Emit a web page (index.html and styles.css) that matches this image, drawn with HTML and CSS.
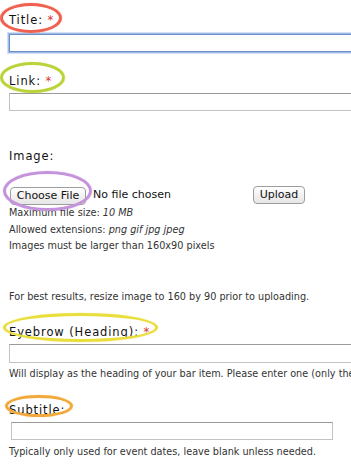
FILE: index.html
```html
<!DOCTYPE html>
<html>
<head>
<meta charset="utf-8">
<link rel="stylesheet" href="styles.css">
</head>
<body>
<form class="form">
  <div class="field field-title">
    <label class="label"><span class="mark mark-red"></span>Title: <span class="req">*</span></label>
    <input class="text wide focus" type="text">
  </div>
  <div class="field field-link">
    <label class="label"><span class="mark mark-green"></span>Link: <span class="req">*</span></label>
    <input class="text wide" type="text">
  </div>
  <div class="field field-image">
    <label class="label">Image:</label>
    <div class="upload-row">
      <span class="file-wrap"><span class="mark mark-purple"></span><span class="btn btn-choose">Choose File</span></span>
      <span class="nofile">No file chosen</span>
      <span class="btn btn-upload">Upload</span>
    </div>
    <div class="desc lines">
      <div>Maximum file size: <em>10 MB</em></div>
      <div>Allowed extensions: <em>png gif jpg jpeg</em></div>
      <div>Images must be larger than 160x90 pixels</div>
    </div>
    <div class="desc best">For best results, resize image to 160 by 90 prior to uploading.</div>
  </div>
  <div class="field field-eyebrow">
    <label class="label"><span class="mark mark-yellow"></span>Eyebrow (Heading): <span class="req">*</span></label>
    <input class="text wide" type="text">
    <div class="desc">Will display as the heading of your bar item. Please enter one (only the first one will be used).</div>
  </div>
  <div class="field field-subtitle">
    <label class="label"><span class="mark mark-orange"></span>Subtitle:</label>
    <input class="text short" type="text">
    <div class="desc">Typically only used for event dates, leave blank unless needed.</div>
  </div>
</form>
</body>
</html>
```

FILE: styles.css
```css
html, body {
  margin: 0;
  padding: 0;
  background: #fff;
  overflow: hidden;
}
body {
  width: 351px;
  height: 469px;
  font-family: "DejaVu Sans", Verdana, sans-serif;
  color: #000;
}
.form {
  padding: 12px 0 0 9px;
  width: 342px;
  overflow: hidden;
}
.field {
  display: flex;
  flex-direction: column;
  align-items: flex-start;
}
.label {
  position: relative;
  display: inline-block;
  font-size: 11.5px;
  line-height: 16px;
  letter-spacing: 0.9px;
  color: #111;
}
.req {
  color: #d33;
}
.mark {
  position: absolute;
  border-radius: 50%;
  border: 3px solid;
  pointer-events: none;
}
.mark-red {
  border-color: #f0604f;
  left: -9px; top: -9px; width: 56px; height: 24px;
  box-shadow: 0 0 1px #f0604f;
}
.mark-green {
  border-color: #b9d43a;
  left: -9px; top: -11px; width: 59px; height: 25px;
  box-shadow: 0 0 1px #b9d43a;
}
.mark-purple {
  border-color: #c592dc;
  left: -7px; top: -13px; width: 83px; height: 34px;
  box-shadow: 0 0 1px #c592dc;
}
.mark-yellow {
  border-color: #e9de3c;
  left: -6px; top: -11px; width: 149px; height: 23px;
  box-shadow: 0 0 1px #e9de3c;
}
.mark-orange {
  border-color: #f2a93b;
  left: -4px; top: -7px; width: 62px; height: 16px;
  box-shadow: 0 0 1px #f2a93b;
}
.text {
  display: block;
  box-sizing: border-box;
  height: 18px;
  margin: 4px 0 0 0;
  padding: 0;
  border: 1px solid #c3c3c3;
  border-top-color: #9a9a9a;
  background: #fff;
  outline: none;
}
.wide {
  width: 380px;
}
.short {
  width: 322px;
  margin-left: 2px;
}
.focus {
  border: 1px solid #6b8fc8;
  box-shadow: 0 0 0 1px #9fbbe6, 0 0 0 2px #d2e0f5;
  margin-top: 6px;
  margin-bottom: 1px;
}
.field-link {
  margin-top: 20px;
}
.field-image {
  margin-top: 37px;
}
.upload-row {
  display: flex;
  align-items: center;
  margin-top: 20px;
  width: 296px;
}
.file-wrap {
  position: relative;
  display: inline-block;
  margin-left: 1px;
}
.btn {
  display: inline-block;
  box-sizing: border-box;
  height: 18px;
  padding: 0 6px;
  border: 1px solid #9d9d9d;
  border-radius: 4px;
  background: linear-gradient(#ffffff, #f2f2f2 50%, #e6e6e6);
  font-family: "DejaVu Sans", Verdana, sans-serif;
  font-size: 11px;
  line-height: 16px;
  color: #111;
}
.btn-choose {
  width: 76px;
  text-align: center;
  padding: 0;
}
.nofile {
  font-size: 11px;
  margin-left: 7px;
  color: #111;
}
.btn-upload {
  margin-left: auto;
  width: 52px;
  text-align: center;
  padding: 0;
}
.desc {
  font-size: 9.7px;
  line-height: 16.5px;
  color: #333;
  white-space: nowrap;
}
.desc em {
  font-style: italic;
}
.lines {
  margin-top: 0;
}
.best {
  margin-top: 34px;
}
.field-eyebrow {
  margin-top: 19px;
}
.field-eyebrow .text {
  height: 19px;
}
.field-eyebrow .desc {
  margin-top: 3px;
}
.field-subtitle {
  margin-top: 19px;
}
.field-subtitle .text {
  margin-top: 4px;
}
.field-subtitle .desc {
  margin-top: 4px;
}
```
